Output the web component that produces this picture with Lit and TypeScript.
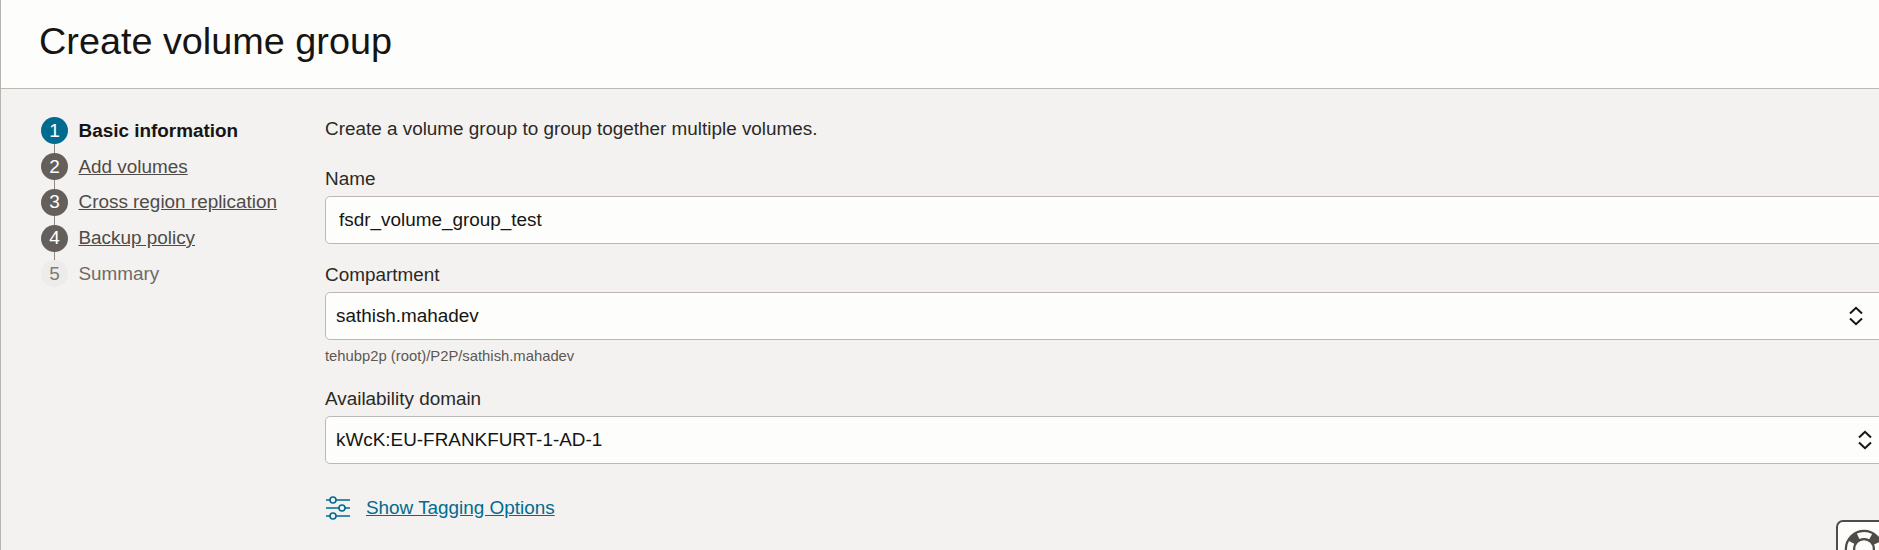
import { LitElement, html, css } from "lit";
import { customElement } from "lit/decorators.js";

const chevrons = (cls: string) => html`<svg class="updown ${cls}" width="14" height="20" viewBox="0 0 14 20" fill="none" stroke="#161513" stroke-width="2"><path d="M1 7.5 7 1.8l6 5.7"/><path d="M1 12.5l6 5.7 6-5.7"/></svg>`;

@customElement("app-root")
export class AppRoot extends LitElement {
  static styles = css`
    :host { display: block; width: 1879px; height: 550px; overflow: hidden; position: relative; background: #f3f2f1; font-family: "Liberation Sans", Arial, sans-serif; color: #161513; box-sizing: border-box; border-left: 1px solid #b8b3ad; }
    * { box-sizing: border-box; }
    .head { height: 89px; background: #fdfdfc; border-bottom: 1px solid #bdb8b2; padding: 18px 0 0 38px; }
    h1 { margin: 0; font-size: 37.8px; line-height: 46px; font-weight: 400; }
    .body { display: flex; padding-top: 24px; }
    .steps { width: 324px; padding: 0 0 0 40px; flex: none; display: flex; flex-direction: column; }
    .step { display: flex; align-items: center; height: 35.75px; font-size: 18.9px; gap: 10.5px; position: relative; color: #4f4b47; }
    .step a { color: inherit; text-decoration: underline; }
    .num { width: 27px; height: 27px; border-radius: 50%; background: #655f5b; color: #fff; display: flex; align-items: center; justify-content: center; font-size: 19px; flex: none; position: relative; }
    .num.line::after { content: ""; position: absolute; left: 13px; top: 27px; width: 1px; height: 9px; background: #8d8883; }
    .step.cur { color: #161513; font-weight: 700; }
    .step.cur .num { background: #006b8f; font-weight: 400; }
    .step.off { color: #6f6b66; }
    .step.off .num { background: #eeecea; color: #7e7a75; }
    .main { flex: 1; min-width: 0; padding-top: 5px; }
    .intro { font-size: 18.9px; line-height: 22px; height: 22px; margin: 0 0 28px; color: #2b2926; }
    label { display: block; font-size: 18.9px; line-height: 22px; color: #2b2926; margin-bottom: 6px; }
    .field { height: 48px; width: 1600px; background: #fdfdfc; border: 1px solid #bdb8b2; border-radius: 5px; display: flex; align-items: center; justify-content: space-between; padding: 0 10px; font-size: 18.9px; }
    .field.text { padding-left: 13px; }
    .group { margin-bottom: 20px; }
    .group.hinted { margin-bottom: 24px; }
    .hint { font-size: 14.8px; line-height: 16px; color: #5c5853; margin-top: 8px; }
    .updown { flex: none; }
    .updown.c1 { margin-right: 51px; }
    .updown.c2 { margin-right: 42px; }
    .tags { display: flex; align-items: center; gap: 16px; margin-top: 32px; padding-left: 1px; color: #006b8f; font-size: 18.9px; }
    .tags a { color: inherit; text-decoration: underline; }
    .help { position: absolute; left: 1835px; top: 520px; width: 60px; height: 56px; background: #fdfdfc; border: 2px solid #4f4b47; border-radius: 7px; padding: 7px 0 0 6px; }
    .help svg { display: block; }
  `;

  render() {
    const steps = [
      ["1", "Basic information", "cur"],
      ["2", "Add volumes", "link"],
      ["3", "Cross region replication", "link"],
      ["4", "Backup policy", "link"],
      ["5", "Summary", "off"],
    ];
    return html`
      <div class="head"><h1>Create volume group</h1></div>
      <div class="body">
        <nav class="steps">
          ${steps.map(([n, t, k], i) => html`<div class="step ${k}"><span class="num ${i < 4 ? "line" : ""}">${n}</span>${k === "link" ? html`<a href="#">${t}</a>` : html`<span>${t}</span>`}</div>`)}
        </nav>
        <div class="main">
          <p class="intro">Create a volume group to group together multiple volumes.</p>
          <div class="group"><label>Name</label><div class="field text">fsdr_volume_group_test</div></div>
          <div class="group hinted"><label>Compartment</label><div class="field">sathish.mahadev${chevrons("c1")}</div><div class="hint">tehubp2p (root)/P2P/sathish.mahadev</div></div>
          <div class="group"><label>Availability domain</label><div class="field">kWcK:EU-FRANKFURT-1-AD-1${chevrons("c2")}</div></div>
          <div class="tags">
            <svg width="24" height="24" viewBox="0 0 24 24" fill="none" stroke="#006b8f" stroke-width="1.6">
              <path d="M0 4h4M10 4h14M0 12h13M19 12h5M0 20h4M10 20h14"/><circle cx="7" cy="4" r="3"/><circle cx="16" cy="12" r="3"/><circle cx="7" cy="20" r="3"/>
            </svg>
            <a href="#">Show Tagging Options</a>
          </div>
        </div>
      </div>
      <div class="help">
        <svg width="40" height="40" viewBox="0 0 40 40">
          <circle cx="20" cy="20" r="14" fill="none" stroke="#4f4b47" stroke-width="10.5"/>
          <circle cx="20" cy="20" r="14" fill="none" stroke="#fdfdfc" stroke-width="6" stroke-dasharray="13 9" stroke-dashoffset="6.5" />
        </svg>
      </div>
    `;
  }
}
